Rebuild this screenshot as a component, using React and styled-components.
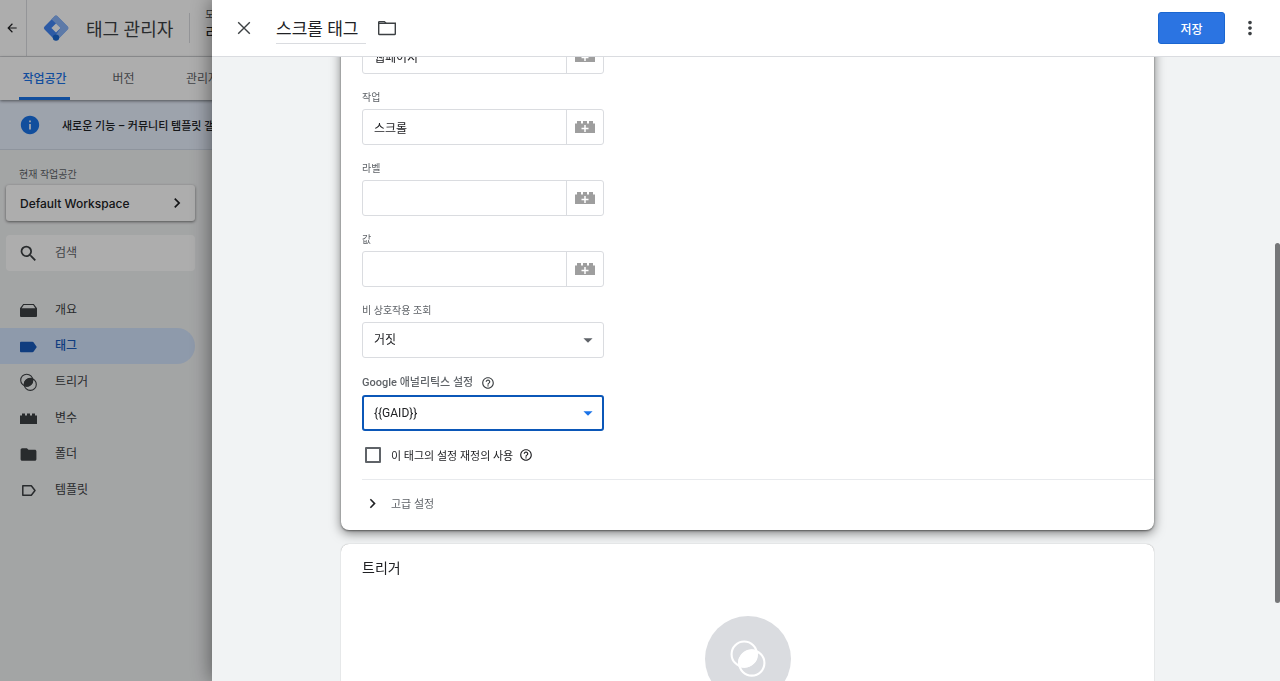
import React, { useLayoutEffect, useRef, useState } from 'react';
import styled, { createGlobalStyle } from 'styled-components';
import {
  MdArrowBack,
  MdArrowDropDown,
  MdChevronRight,
  MdFolder,
  MdHelpOutline,
  MdInfo,
  MdMoreVert,
  MdSearch,
} from 'react-icons/md';

const GlobalStyle = createGlobalStyle`
  * {
    box-sizing: border-box;
  }

  body {
    margin: 0;
    overflow: hidden;
    font-family: Roboto, 'Noto Sans CJK KR', sans-serif;
    font-size: 12px;
    color: #202124;
    background: #f1f3f4;
  }

  button, input, select {
    font: inherit;
    color: inherit;
  }

  svg {
    display: block;
    flex: none;
  }
`;

const Page = styled.div`
  display: flex;
  flex-direction: column;
  min-height: 100vh;
`;

const TopBar = styled.header`
  display: flex;
  align-items: center;
  height: 57px;
  background: #fff;
  border-bottom: 1px solid #dadce0;
  white-space: nowrap;
`;

const IconButton = styled.button`
  display: flex;
  align-items: center;
  justify-content: center;
  width: ${({ $width }) => $width || 24}px;
  height: ${({ $height }) => $height || 24}px;
  padding: 0;
  border: none;
  background: none;
  color: #3c4043;
  cursor: pointer;
`;

const BackCell = styled.div`
  display: flex;
  align-items: center;
  width: 27px;
  height: 100%;
  border-right: 1px solid #dadce0;

  svg {
    color: #202124;
  }
`;

const Product = styled.div`
  display: flex;
  align-items: center;
  gap: 16px;
  padding: 0 16px 0 15px;
  font-size: 18px;
  color: #3c4043;
`;

const Account = styled.div`
  display: flex;
  flex-direction: column;
  justify-content: center;
  height: 30px;
  padding: 0 0 6px 15px;
  border-left: 1px solid #dadce0;
  font-size: 15px;
  line-height: 20px;
`;

const AccountPath = styled.span`
  font-size: 10px;
  line-height: 16px;
  color: #3c4043;
`;

const Tabs = styled.nav`
  display: flex;
  gap: 28px;
  height: 43px;
  padding-left: 19px;
  background: #fff;
  box-shadow: 0 1px 3px rgba(0, 0, 0, 0.5);
  z-index: 1;
`;

const Tab = styled.a`
  display: flex;
  align-items: center;
  justify-content: center;
  width: 51px;
  padding-top: 1px;
  border-bottom: 3px solid ${({ $active }) => ($active ? '#1a73e8' : 'transparent')};
  color: ${({ $active }) => ($active ? '#1a73e8' : '#5f6368')};
  font-weight: ${({ $active }) => ($active ? 500 : 400)};
  text-decoration: none;
  white-space: nowrap;
`;

const Banner = styled.div`
  display: flex;
  align-items: center;
  gap: 21px;
  height: 50px;
  padding-left: 19px;
  background: #e8f0fe;
  border-bottom: 1px solid #d2dbe8;
  font-size: 11px;
  font-weight: 500;
  white-space: nowrap;

  svg {
    color: #1a73e8;
  }
`;

const Sidebar = styled.aside`
  display: flex;
  flex-direction: column;
  width: 195px;
  padding-top: 17px;
`;

const SidebarLabel = styled.span`
  padding-left: 19px;
  font-size: 10px;
  line-height: 16px;
  color: #5f6368;
`;

const WorkspaceButton = styled.button`
  display: flex;
  align-items: center;
  justify-content: space-between;
  height: 36px;
  margin: 2px 0 0 6px;
  padding: 0 8px 0 14px;
  border: none;
  border-radius: 3px;
  background: #fff;
  box-shadow: 0 1px 3px rgba(0, 0, 0, 0.5);
  font-family: Inter, sans-serif;
  font-size: 12px;
  font-weight: 500;
  cursor: pointer;
`;

const SearchBox = styled.label`
  display: flex;
  align-items: center;
  gap: 16px;
  height: 36px;
  margin: 14px 0 21px 6px;
  padding-left: 12px;
  border-radius: 4px;
  background: #fff;
  color: #3c4043;
`;

const SearchInput = styled.input`
  width: 120px;
  padding: 0;
  border: none;
  outline: none;
  background: none;

  &::placeholder {
    color: #5f6368;
    opacity: 1;
  }
`;

const NavItem = styled.a`
  display: flex;
  align-items: center;
  gap: 17px;
  height: 36px;
  padding-left: 19px;
  border-radius: 0 18px 18px 0;
  background: ${({ $active }) => ($active ? '#d2e3fc' : 'transparent')};
  color: ${({ $active }) => ($active ? '#185abc' : '#3c4043')};
  font-weight: ${({ $active }) => ($active ? 500 : 400)};
  text-decoration: none;
`;

const NavText = styled.span`
  padding-bottom: 3px;
`;

const Backdrop = styled.div`
  position: fixed;
  inset: 0;
  z-index: 2;
  background: rgba(0, 0, 0, 0.32);
`;

const Drawer = styled.section`
  position: fixed;
  inset: 0 0 0 212px;
  z-index: 3;
  display: flex;
  flex-direction: column;
  background: #f1f3f4;
  box-shadow: 0 0 20px rgba(0, 0, 0, 0.5);
`;

const DrawerHeader = styled.header`
  display: flex;
  align-items: center;
  flex: none;
  height: 57px;
  padding: 0 18px 0 20px;
  border-bottom: 1px solid #dadce0;
  background: #fff;
`;

const TitleInput = styled.input`
  width: 90px;
  height: 32px;
  margin: 0 9px 0 20px;
  padding: 0;
  border: none;
  border-bottom: 1px solid #dadce0;
  outline: none;
  font-size: 17px;
`;

const SaveButton = styled.button`
  width: 67px;
  height: 32px;
  margin: 0 13px 0 auto;
  border: 1px solid #1a66d0;
  border-radius: 3px;
  background: #2b74e2;
  color: #fff;
  font-weight: 500;
  cursor: pointer;
`;

const DrawerBody = styled.div`
  flex: 1;
  min-height: 0;
  overflow-y: scroll;
  scrollbar-width: none;
  padding: 20px 126px 20px 129px;
`;

const ScrollThumb = styled.div`
  position: absolute;
  top: 243px;
  right: 0;
  width: 5px;
  height: 360px;
  border-radius: 3px;
  background: #757678;
`;

const Card = styled.div`
  position: relative;
  padding-left: 21px;
  border-radius: 8px;
  background: #fff;
  box-shadow: ${({ $raised }) => ($raised
    ? '0 1px 2px rgba(0, 0, 0, 0.45), 0 3px 11px rgba(0, 0, 0, 0.5)'
    : '0 0 1px rgba(0, 0, 0, 0.45)')};
`;

const ConfigCard = styled(Card)`
  padding-top: 24px;
  margin-bottom: 14px;
`;

const TriggerCard = styled(Card)`
  min-height: 220px;
  padding: 12px 21px;
`;

const Field = styled.div`
  width: 242px;
  margin-bottom: 16px;
`;

const FieldLabel = styled.label`
  display: flex;
  align-items: center;
  gap: 8px;
  margin-bottom: 3px;
  font-size: ${({ $large }) => ($large ? 11 : 10)}px;
  font-weight: ${({ $large }) => ($large ? 500 : 400)};
  line-height: ${({ $large }) => ($large ? 18 : 16)}px;
  color: #5f6368;

  svg {
    color: #3c4043;
  }
`;

const InputGroup = styled.div`
  display: flex;
  height: 36px;
  border: 1px solid #dadce0;
  border-radius: 3px;
`;

const TextInput = styled.input`
  flex: 1;
  min-width: 0;
  padding: 0 11px;
  border: none;
  border-right: 1px solid #dadce0;
  outline: none;
  background: none;
`;

const SelectWrapper = styled.div`
  display: grid;
  align-items: center;

  > * {
    grid-area: 1 / 1;
  }

  svg {
    justify-self: end;
    margin-right: 5px;
    color: ${({ $focused }) => ($focused ? '#1a73e8' : '#5f6368')};
    pointer-events: none;
  }
`;

const Select = styled.select`
  width: 100%;
  height: 36px;
  padding: 0 ${({ $focused }) => ($focused ? 10 : 11)}px;
  border: ${({ $focused }) => ($focused ? '2px solid #0b57b8' : '1px solid #dadce0')};
  border-radius: 3px;
  outline: none;
  appearance: none;
  background: #fff;
`;

const CheckRow = styled.label`
  display: flex;
  align-items: center;
  height: 16px;
  padding-left: 3px;
  margin-bottom: 16px;
  font-size: 11px;
`;

const Checkbox = styled.input`
  width: 16px;
  height: 16px;
  margin: 0 10px 0 0;
  border: 2px solid #5f6368;
  border-radius: 1px;
  appearance: none;

  &:checked {
    background: #1a73e8;
  }
`;

const CheckText = styled.span`
  margin-right: 6px;
`;

const AdvancedButton = styled.button`
  display: flex;
  align-items: center;
  gap: 9px;
  width: 100%;
  height: 51px;
  padding: 0 0 4px 1px;
  border: none;
  border-top: 1px solid #e8eaed;
  background: none;
  font-size: 11px;
  color: #5f6368;
  cursor: pointer;

  svg {
    color: #202124;
  }
`;

const CardTitle = styled.h2`
  margin: 0 0 36px;
  font-size: 14px;
  font-weight: 400;
  line-height: 24px;
`;

const TriggerCircle = styled.div`
  display: flex;
  align-items: center;
  justify-content: center;
  width: 86px;
  height: 86px;
  margin: 0 auto;
  border-radius: 50%;
  background: #dadce0;
  color: #fff;
`;

const Logo = () => (
  <svg width="28" height="28" viewBox="0 0 28 28">
    <rect x="4.800" y="4.800" width="18.400" height="18.400" rx="2.200" transform="rotate(45 14 14)" fill="#4285f4" />
    <path d="m9.400 5.200 3-3a2.200 2.200 0 0 1 3.200 0l10.200 10.200a2.200 2.200 0 0 1 0 3.200L17 24.400l-3.200-3.500 5-6.900z" fill="#8ab4f8" />
    <path d="m14 9.400 4.600 4.600-4.600 4.600L9.400 14z" fill="#fff" />
    <circle cx="14" cy="23.600" r="3.200" fill="#1967d2" />
  </svg>
);

const CloseIcon = () => (
  <svg width="14" height="14" viewBox="0 0 14 14" fill="none" stroke="currentColor" strokeWidth="1.4">
    <path d="m1.200 1.200 11.600 11.600M12.800 1.200 1.200 12.800" />
  </svg>
);

const FolderIcon = () => (
  <svg width="20" height="16" viewBox="0 0 20 16" fill="none" stroke="currentColor" strokeWidth="1.400">
    <path d="M1.700 3.300h16.600v10.400a.8.8 0 0 1-.8.8h-15a.8.8 0 0 1-.8-.8z" />
    <path d="M1.700 3.500V2.300c0-.4.300-.7.700-.7h5l1.600 1.700" />
  </svg>
);

const OverviewIcon = () => (
  <svg width="19" height="18" viewBox="0 0 19 18" fill="currentColor">
    <path d="M4.200 3h10.600L18 7.200v1H1v-1zM4.800 4.100 2.700 7.200h13.600l-2.100-3.100z" fillRule="evenodd" />
    <path d="M1 8h17v7a1 1 0 0 1-1 1H2a1 1 0 0 1-1-1z" />
  </svg>
);

const TagIcon = () => (
  <svg width="19" height="18" viewBox="0 0 19 18" fill="currentColor">
    <path d="M2 4.800h11.400c.5 0 .8.200 1.100.5L17.800 10l-3.300 4.700c-.3.300-.6.500-1.100.5H2a1 1 0 0 1-1-1V5.800a1 1 0 0 1 1-1z" />
  </svg>
);

const TriggerIcon = ({ size = 19, stroke = 1.1 }) => (
  <svg width={size} height={size} viewBox="0 0 19 19" fill="none" stroke="currentColor" strokeWidth={stroke}>
    <circle cx="7.700" cy="7.200" r="6" />
    <circle cx="11.300" cy="11.400" r="6" />
    <path d="M13.600 6A6 6 0 0 1 5.400 12.600A6 6 0 0 1 13.600 6z" fill="currentColor" />
  </svg>
);

const VariableIcon = () => (
  <svg width="19" height="18" viewBox="0 0 19 18" fill="currentColor">
    <path d="M1 6.500h2V4.500h3v2h2v-2h3v2h2v-2h3v2h2V15H1z" />
  </svg>
);

const TemplateIcon = () => (
  <svg width="19" height="18" viewBox="0 0 19 18" fill="none" stroke="currentColor" strokeWidth="1.5" strokeLinejoin="round">
    <path d="M3.800 4.800h8.500L16 9.500l-3.700 4.700H3.800z" />
  </svg>
);

const BrickPlusIcon = () => (
  <svg width="20" height="14" viewBox="0 0 20 14">
    <path d="M0 3.500h2V1h4v2.500h2V1h4v2.500h2V1h4v2.500h2V13H0z" fill="#9e9e9e" />
    <path d="M10 5v7M6.500 8.500h7" stroke="#fff" strokeWidth="1.500" />
  </svg>
);

const TABS = ['작업공간', '버전', '관리자'];

const NAV_ITEMS = [
  { label: '개요', icon: <OverviewIcon /> },
  { label: '태그', icon: <TagIcon />, active: true },
  { label: '트리거', icon: <TriggerIcon /> },
  { label: '변수', icon: <VariableIcon /> },
  { label: '폴더', icon: <MdFolder size={19} /> },
  { label: '템플릿', icon: <TemplateIcon /> },
];

function VariableField({ id, label, defaultValue }) {
  return (
    <Field>
      <FieldLabel htmlFor={id}>{label}</FieldLabel>
      <InputGroup>
        <TextInput id={id} defaultValue={defaultValue} />
        <IconButton type="button" $width={36} $height={34} aria-label="변수 선택">
          <BrickPlusIcon />
        </IconButton>
      </InputGroup>
    </Field>
  );
}

export default function App() {
  const bodyRef = useRef(null);
  const [title, setTitle] = useState('스크롤 태그');
  const [override, setOverride] = useState(false);

  useLayoutEffect(() => {
    bodyRef.current.scrollTop = 82;
  }, []);

  return (
    <>
      <GlobalStyle />
      <Page>
        <TopBar>
          <BackCell>
            <IconButton type="button" aria-label="뒤로">
              <MdArrowBack size={14} />
            </IconButton>
          </BackCell>
          <Product>
            <Logo />
            태그 관리자
          </Product>
          <Account>
            <AccountPath>모든 계정</AccountPath>
            리
          </Account>
        </TopBar>
        <Tabs>
          {TABS.map((tab, index) => (
            <Tab key={tab} href="#" $active={index === 0}>{tab}</Tab>
          ))}
        </Tabs>
        <Banner>
          <MdInfo size={22} />
          새로운 기능 – 커뮤니티 템플릿 갤러리
        </Banner>
        <Sidebar>
          <SidebarLabel>현재 작업공간</SidebarLabel>
          <WorkspaceButton type="button">
            Default Workspace
            <MdChevronRight size={20} />
          </WorkspaceButton>
          <SearchBox>
            <MdSearch size={21} />
            <SearchInput placeholder="검색" aria-label="검색" />
          </SearchBox>
          {NAV_ITEMS.map(({ label, icon, active }) => (
            <NavItem key={label} href="#" $active={active}>
              {icon}
              <NavText>{label}</NavText>
            </NavItem>
          ))}
        </Sidebar>
      </Page>
      <Backdrop />
      <Drawer>
        <DrawerHeader>
          <IconButton type="button" aria-label="닫기">
            <CloseIcon />
          </IconButton>
          <TitleInput
            aria-label="태그 이름"
            value={title}
            onChange={(e) => setTitle(e.target.value)}
          />
          <IconButton type="button" aria-label="폴더">
            <FolderIcon />
          </IconButton>
          <SaveButton type="button">저장</SaveButton>
          <IconButton type="button" aria-label="더보기">
            <MdMoreVert size={22} />
          </IconButton>
        </DrawerHeader>
        <DrawerBody ref={bodyRef}>
          <ConfigCard $raised>
            <VariableField id="category" label="카테고리" defaultValue="웹페이지" />
            <VariableField id="action" label="작업" defaultValue="스크롤" />
            <VariableField id="label" label="라벨" />
            <VariableField id="value" label="값" />
            <Field>
              <FieldLabel htmlFor="interaction">비 상호작용 조회</FieldLabel>
              <SelectWrapper>
                <Select id="interaction">
                  <option>거짓</option>
                </Select>
                <MdArrowDropDown size={22} />
              </SelectWrapper>
            </Field>
            <Field>
              <FieldLabel htmlFor="settings" $large>
                Google 애널리틱스 설정
                <MdHelpOutline size={14} />
              </FieldLabel>
              <SelectWrapper $focused>
                <Select id="settings" $focused>
                  <option>{'{{GAID}}'}</option>
                </Select>
                <MdArrowDropDown size={22} />
              </SelectWrapper>
            </Field>
            <CheckRow>
              <Checkbox
                type="checkbox"
                checked={override}
                onChange={(e) => setOverride(e.target.checked)}
              />
              <CheckText>이 태그의 설정 재정의 사용</CheckText>
              <MdHelpOutline size={14} />
            </CheckRow>
            <AdvancedButton type="button">
              <MdChevronRight size={19} />
              고급 설정
            </AdvancedButton>
          </ConfigCard>
          <TriggerCard>
            <CardTitle>트리거</CardTitle>
            <TriggerCircle>
              <TriggerIcon size={40} stroke={1} />
            </TriggerCircle>
          </TriggerCard>
        </DrawerBody>
        <ScrollThumb />
      </Drawer>
    </>
  );
}
